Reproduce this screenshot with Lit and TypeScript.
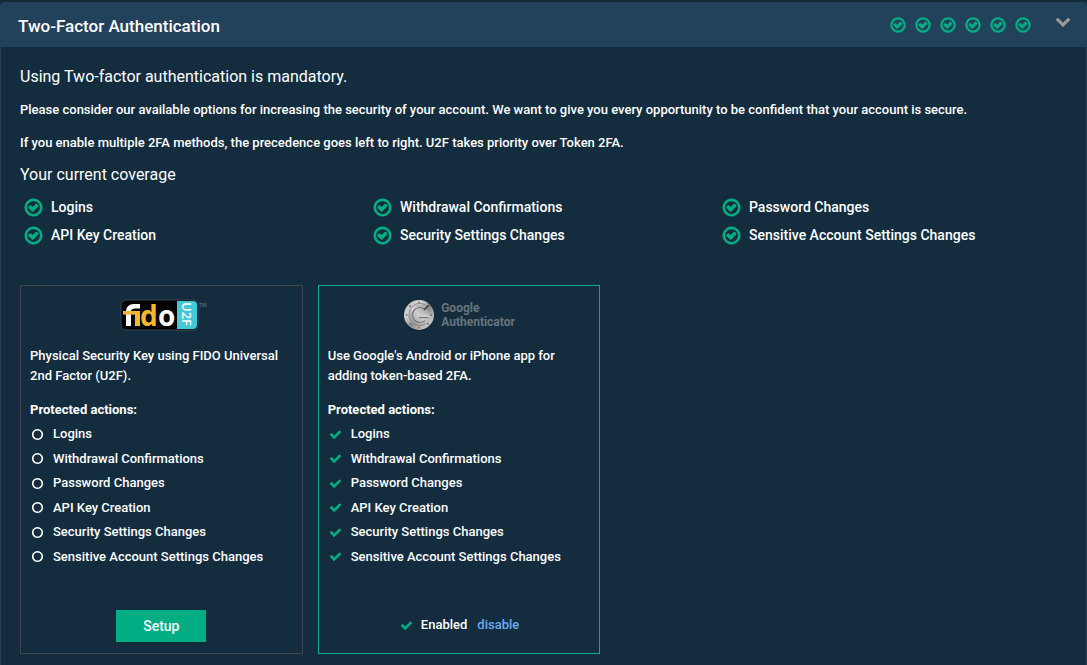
import { LitElement, html, css, svg } from "lit";
import { customElement, property } from "lit/decorators.js";

const ICONS: Record<string, string> = {
  "check-circle":
    "M1299 813l-422 422q-24 24-57 24t-57-24l-294-294q-24-24-24-57t24-57l102-102q24-24 57-24t57 24l135 135 263-263q24-24 57-24t57 24l102 102q24 24 24 57t-24 57zm141 83q0-148-73-273t-198-198-273-73-273 73-198 198-73 273 73 273 198 198 273 73 273-73 198-198 73-273zm224 0q0 209-103 385.5t-279.5 279.5-385.5 103-385.5-103-279.5-279.5-103-385.5 103-385.5 279.5-279.5 385.5-103 385.5 103 279.5 279.5 103 385.5z",
  check:
    "M1671 566q0 40-28 68l-724 724-136 136q-28 28-68 28t-68-28l-136-136-362-362q-28-28-28-68t28-68l136-136q28-28 68-28t68 28l294 295 656-657q28-28 68-28t68 28l136 136q28 28 28 68z",
  circle:
    "M896 352q-148 0-273 73t-198 198-73 273 73 273 198 198 273 73 273-73 198-198 73-273-73-273-198-198-273-73zm768 544q0 209-103 385.5t-279.5 279.5-385.5 103-385.5-103-279.5-279.5-103-385.5 103-385.5 279.5-279.5 385.5-103 385.5 103 279.5 279.5 103 385.5z",
  chevron:
    "M1683 808l-742 741q-19 19-45 19t-45-19l-742-741q-19-19-19-45.5t19-45.5l166-165q19-19 45-19t45 19l531 531 531-531q19-19 45-19t45 19l166 165q19 19 19 45.5t-19 45.5z",
};

const COVERAGE = [
  "Logins",
  "Withdrawal Confirmations",
  "Password Changes",
  "API Key Creation",
  "Security Settings Changes",
  "Sensitive Account Settings Changes",
];

@customElement("fa-icon")
class FaIcon extends LitElement {
  @property() name = "check";
  static styles = css`
    :host {
      display: block;
      flex: none;
      width: 14px;
      height: 14px;
    }
    .glyph {
      display: block;
      width: 100%;
      height: 100%;
      fill: currentColor;
    }
  `;
  render() {
    return html`<svg class="glyph" viewBox="0 0 1792 1792" aria-hidden="true">
      ${svg`<path d=${ICONS[this.name]}></path>`}
    </svg>`;
  }
}

@customElement("fido-logo")
class FidoLogo extends LitElement {
  static styles = css`
    :host {
      display: block;
    }
    .logo {
      display: block;
      width: 88px;
      height: 32px;
      overflow: visible;
    }
    .word {
      font: 700 28px "Open Sans", "Noto Sans", sans-serif;
    }
    .side {
      font: 600 13px "Open Sans", "Noto Sans", sans-serif;
      fill: #fff;
    }
    .tm {
      font: 700 5px "Open Sans", sans-serif;
      fill: #56646e;
    }
  `;
  render() {
    return html`<svg class="logo" viewBox="0 0 88 32" role="img" aria-label="FIDO U2F">
      <rect x="1" y="1" width="77" height="30" rx="5" fill="#000" stroke="#3b4951" stroke-width="1" />
      <path d="M57 2h16a4 4 0 0 1 4 4v20a4 4 0 0 1-4 4H57z" fill="#45c8d6" />
      <path
        d="M6 27V13c0-5 3-8 8-8h6v4.600h-5c-2.600 0-4 1-4 3.400V27z"
        fill="#fff"
      />
      <path d="M3 12h17v3.600H3z" fill="#f4b82e" />
      <rect x="15" y="15" width="5" height="12" fill="#f4b82e" />
      <text class="word" x="20" y="27" fill="#f4b82e">d</text>
      <text class="word" x="38" y="27" fill="#fff">o</text>
      <text class="side" transform="translate(62 3) rotate(90)">U2F</text>
      <text class="tm" x="79" y="8">TM</text>
    </svg>`;
  }
}

@customElement("authenticator-logo")
class AuthenticatorLogo extends LitElement {
  static styles = css`
    :host {
      display: flex;
      align-items: center;
      gap: 6px;
    }
    .dial {
      display: block;
      width: 32px;
      height: 32px;
    }
    .name {
      font: 700 12px/14px Roboto, sans-serif;
      color: #69747b;
    }
  `;
  render() {
    const bolts = [0, 45, 90, 135, 180, 225, 270];
    return html`
      <svg class="dial" viewBox="0 0 32 32" aria-hidden="true">
        <defs>
          <linearGradient id="rim" x1="0" y1="0" x2="1" y2="1">
            <stop offset="0" stop-color="#aaa" />
            <stop offset="0.3" stop-color="#d8d8d8" />
            <stop offset="0.55" stop-color="#8d8d8d" />
            <stop offset="0.8" stop-color="#c4c4c4" />
            <stop offset="1" stop-color="#929292" />
          </linearGradient>
          <linearGradient id="face" x1="0" y1="1" x2="1" y2="0">
            <stop offset="0" stop-color="#858585" />
            <stop offset="0.5" stop-color="#d0d0d0" />
            <stop offset="1" stop-color="#929292" />
          </linearGradient>
        </defs>
        <circle cx="16" cy="17" r="15" fill="#0b1d29" />
        <circle cx="16" cy="16" r="15" fill="url(#rim)" />
        ${bolts.map(
          (a) => svg`<circle cx="28.400" cy="16" r="1" fill="#77797a" transform=${`rotate(${a} 16 16)`}></circle>`,
        )}
        <circle cx="16" cy="16" r="10" fill="url(#face)" />
        <path d="M24.500 7.500A11 11 0 1 0 23 24.500" fill="none" stroke="#8a8a8a" stroke-width="1" />
        <path d="M22 10.500A7.500 7.500 0 1 0 22 21.500" fill="none" stroke="#777" stroke-width="1.200" />
        <path d="M21 11l5-5" stroke="#414141" stroke-width="1.600" />
        <path d="M16 15.500h10v3H16z" fill="#cdcdcd" />
        <path d="M16 18.700h9" stroke="#626262" stroke-width="1" />
      </svg>
      <span class="name">Google<br />Authenticator</span>
    `;
  }
}

@customElement("app-root")
class AppRoot extends LitElement {
  static styles = css`
    :host {
      display: block;
      box-sizing: border-box;
      min-height: 100vh;
      padding-top: 2px;
      background: #112a38;
      color: #fff;
      font: 500 13px/20px Roboto, sans-serif;
    }
    * {
      box-sizing: border-box;
    }
    h2,
    h3,
    h4,
    p,
    ul {
      margin: 0;
      padding: 0;
      list-style: none;
    }
    .panel {
      min-height: calc(100vh - 2px);
      border: 1px solid #22425c;
      border-top: 0;
      border-bottom: 0;
      border-radius: 4px 4px 0 0;
      background: #132d3f;
      overflow: hidden;
    }
    .header {
      display: flex;
      align-items: center;
      height: 45px;
      padding: 0 15px 0 17px;
      background: #22425c;
    }
    .title {
      flex: 1;
      font-size: 17px;
      font-weight: 500;
      line-height: 24px;
      padding-top: 2px;
    }
    .status {
      display: flex;
      gap: 7px;
      color: #01ad82;
    }
    .status fa-icon {
      width: 18px;
      height: 18px;
    }
    .toggle {
      margin-left: 23px;
      padding: 0 0 7px;
      border: 0;
      background: none;
      color: #999;
    }
    .toggle fa-icon {
      width: 16px;
      height: 16px;
    }
    .body {
      padding: 20px 19px 11px;
    }
    .lead {
      font-size: 16px;
      font-weight: 400;
      line-height: 20px;
    }
    .text {
      margin: 13px 0 12px;
    }
    .coverage {
      display: grid;
      grid-template-columns: repeat(3, 1fr);
      grid-auto-rows: 28px;
      margin-top: 8px;
      font-size: 14px;
    }
    .coverage li {
      display: flex;
      align-items: center;
      gap: 7px;
      padding-left: 3px;
    }
    .coverage fa-icon {
      width: 21px;
      height: 21px;
      color: #01ad82;
    }
    .cards {
      display: flex;
      gap: 15px;
      margin-top: 36px;
    }
    .card {
      display: flex;
      flex-direction: column;
      flex: 0 0 27%;
      min-height: 369px;
      padding: 12px 9px 11px;
      border: 1px solid #3f4548;
    }
    .card.on {
      border-color: #01ad82;
    }
    .logo {
      display: flex;
      justify-content: center;
      height: 32px;
      margin: 1px 0 15px;
    }
    .fido {
      padding-left: 6px;
    }
    .sub {
      margin-top: 14px;
      font-size: 13px;
      font-weight: 700;
      line-height: 20px;
    }
    .actions {
      display: grid;
      grid-auto-rows: 1fr;
      height: 147px;
      margin-top: 2px;
    }
    .actions li {
      display: flex;
      align-items: center;
      gap: 9px;
    }
    .mark {
      margin-left: 1px;
      width: 13px;
      height: 13px;
    }
    .on .mark {
      color: #01ad82;
    }
    .footer {
      display: flex;
      align-items: center;
      justify-content: center;
      height: 32px;
      margin-top: auto;
    }
    .on .footer {
      padding-bottom: 2px;
    }
    .setup {
      height: 32px;
      padding: 0 27px;
      border: 0;
      background: #01ad82;
      color: #fff;
      font: 500 14px/20px Roboto, sans-serif;
    }
    .enabled {
      margin: 0 10px 0 8px;
    }
    .link {
      color: #6ba9f2;
      text-decoration: none;
    }
  `;

  private actions(icon: string) {
    return html`
      <h4 class="sub">Protected actions:</h4>
      <ul class="actions">
        ${COVERAGE.map((c) => html`<li><fa-icon class="mark" name=${icon}></fa-icon>${c}</li>`)}
      </ul>
    `;
  }

  render() {
    return html`
      <section class="panel">
        <header class="header">
          <h2 class="title">Two-Factor Authentication</h2>
          <div class="status">
            ${COVERAGE.map(() => html`<fa-icon name="check-circle"></fa-icon>`)}
          </div>
          <button class="toggle" type="button" aria-label="Collapse">
            <fa-icon name="chevron"></fa-icon>
          </button>
        </header>
        <div class="body">
          <h3 class="lead">Using Two-factor authentication is mandatory.</h3>
          <p class="text">
            Please consider our available options for increasing the security of your account. We want
            to give you every opportunity to be confident that your account is secure.
          </p>
          <p class="text">
            If you enable multiple 2FA methods, the precedence goes left to right. U2F takes priority
            over Token 2FA.
          </p>
          <h3 class="lead">Your current coverage</h3>
          <ul class="coverage">
            ${COVERAGE.map((c) => html`<li><fa-icon name="check-circle"></fa-icon>${c}</li>`)}
          </ul>
          <div class="cards">
            <article class="card">
              <div class="logo fido"><fido-logo></fido-logo></div>
              <p>Physical Security Key using FIDO Universal 2nd Factor (U2F).</p>
              ${this.actions("circle")}
              <div class="footer"><button class="setup" type="button">Setup</button></div>
            </article>
            <article class="card on">
              <div class="logo"><authenticator-logo></authenticator-logo></div>
              <p>Use Google's Android or iPhone app for adding token-based 2FA.</p>
              ${this.actions("check")}
              <div class="footer">
                <fa-icon class="mark" name="check"></fa-icon>
                <span class="enabled">Enabled</span>
                <a class="link" href="#disable">disable</a>
              </div>
            </article>
          </div>
        </div>
      </section>
    `;
  }
}
